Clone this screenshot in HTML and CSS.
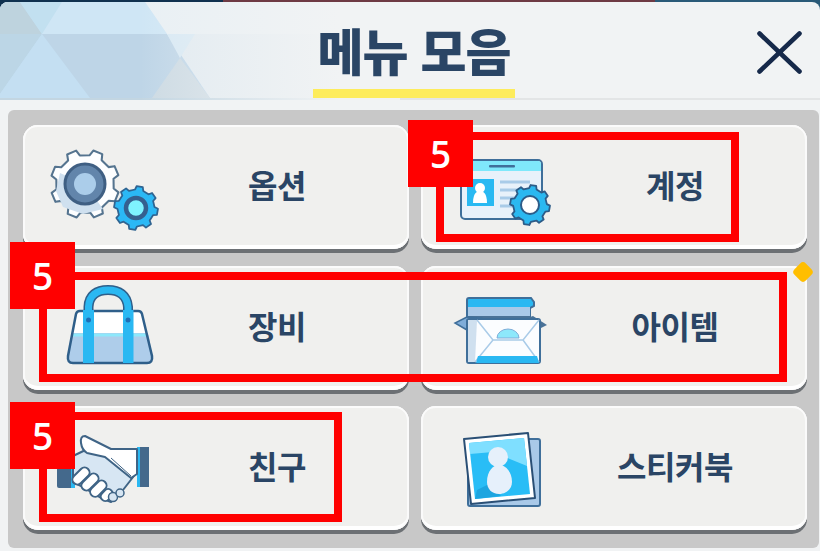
FILE: index.html
```html
<!DOCTYPE html>
<html lang="ko">
<head>
<meta charset="utf-8">
<title>메뉴 모음</title>
<link rel="stylesheet" href="styles.css">
</head>
<body>
<svg class="defs" width="0" height="0" aria-hidden="true">
  <defs>
    <polygon id="gear" points="82,-19 99,-14 99,14 82,19 71,45 80,60 60,80 45,71 19,82 14,99 -14,99 -19,82 -45,71 -60,80 -80,60 -71,45 -82,19 -99,14 -99,-14 -82,-19 -71,-45 -80,-60 -60,-80 -45,-71 -19,-82 -14,-99 14,-99 19,-82 45,-71 60,-80 80,-60 71,-45"/>
  </defs>
</svg>
<div class="screen">
  <header class="header">
    <svg class="header-art" viewBox="0 0 400 98" width="400" height="98" preserveAspectRatio="none" aria-hidden="true">
      <defs>
        <linearGradient id="fade" x1="0" x2="1" y1="0" y2="0">
          <stop offset="0.35" stop-color="#f1f3f4" stop-opacity="0"/>
          <stop offset="0.85" stop-color="#f1f3f4" stop-opacity="1"/>
        </linearGradient>
      </defs>
      <rect width="400" height="98" fill="#c4dff2"/>
      <polygon points="0,0 20,0 42,32 0,32" fill="#bed3de"/>
      <polygon points="20,0 62,0 42,32" fill="#c2e0f0"/>
      <polygon points="62,0 145,0 167,32 42,32" fill="#cfe6f5"/>
      <polygon points="145,0 400,0 400,32 167,32" fill="#e9f0f4"/>
      <polygon points="0,32 42,32 0,92" fill="#bcd6e6"/>
      <polygon points="42,32 90,96 0,96 0,92" fill="#c4dff2"/>
      <polygon points="42,32 167,32 210,96 90,96" fill="#bed5e7"/>
      <polygon points="167,32 400,32 400,96 210,96" fill="#e2ebf1"/>
      <polygon points="167,32 195,32 180,56" fill="#d8e9f4"/>
      <polygon points="180,56 152,96 210,96" fill="#ccdae3"/>
      <rect y="96" width="400" height="2" fill="#c3d6e2"/>
      <rect width="400" height="98" fill="url(#fade)"/>
    </svg>
    <h1 class="title">메뉴 모음</h1>
    <button class="close" type="button" aria-label="닫기">
      <svg width="45" height="43" viewBox="0 0 45 43" aria-hidden="true"><path d="M2.5 2.5 42.5 40.5M42.5 2.5 2.5 40.5" fill="none" stroke="#16294a" stroke-width="4.6" stroke-linecap="round"/></svg>
    </button>
  </header>

  <main class="panel">
    <a class="card">
      <svg class="icon" viewBox="0 0 124 124" aria-hidden="true">
        <use href="#gear" transform="translate(62 59) rotate(22) scale(.345)" fill="#fdfeff" stroke="#55748f" stroke-width="6" stroke-linejoin="round"/>
        <path d="M37 48 62 59 80 84 60 89 40 82 33 66Z" fill="#cfe0ef"/>
        <circle cx="62" cy="59" r="20" fill="#6285ab" stroke="#3f5f83" stroke-width="3"/>
        <circle cx="62" cy="59" r="11" fill="#abcdea"/>
        <use href="#gear" transform="translate(113 83) rotate(10) scale(.22)" fill="#2bb8f5" stroke="#2f6491" stroke-width="8" stroke-linejoin="round"/>
        <circle cx="113" cy="83" r="10" fill="#7ff2ff" stroke="#35608f" stroke-width="4.500"/>
      </svg>
      <span class="label">옵션</span>
    </a>
    <a class="card">
      <svg class="icon" viewBox="0 0 124 124" aria-hidden="true">
        <rect x="40" y="35" width="81" height="59" rx="4" fill="#e8f1fa" stroke="#3f6f9a" stroke-width="2"/>
        <path d="M41 46V39a3 3 0 0 1 3-3h73a3 3 0 0 1 3 3v7Z" fill="#7fe8fb"/>
        <rect x="68" y="40" width="26" height="2.500" rx="1" fill="#3f6f9a"/>
        <rect x="46" y="54" width="27" height="27" fill="#29b9f2"/>
        <circle cx="59" cy="63" r="5" fill="#fff"/>
        <path d="M52 78c0-10 4-12 7-12s7 2 7 12Z" fill="#fff"/>
        <path d="M79 57h30M79 65h30M79 73h22M79 81h18" stroke="#a9cbe8" stroke-width="3"/>
        <use href="#gear" transform="translate(109 80) rotate(10) scale(.2)" fill="#2bb8f0" stroke="#2d5c88" stroke-width="9" stroke-linejoin="round"/>
        <circle cx="109" cy="80" r="9" fill="#fff" stroke="#2d5c88" stroke-width="2"/>
      </svg>
      <span class="label">계정</span>
    </a>
    <a class="card">
      <svg class="icon" viewBox="0 0 124 124" aria-hidden="true">
        <path d="M53 48a4 4 0 0 1 4-3h58a4 4 0 0 1 4 3l10 42q1 7-5 7H50q-6 0-5-7Z" fill="#fff"/>
        <path d="M50 67h73q2 0 3 4l3 20q0 6-5 6H50q-6 0-5-6l3-20q0-4 2-4Z" fill="#aecdea"/>
        <path d="M49 69h75" stroke="#8de8fb" stroke-width="3"/>
        <path d="M53 48a4 4 0 0 1 4-3h58a4 4 0 0 1 4 3l10 42q1 7-5 7H50q-6 0-5-7Z" fill="none" stroke="#2f5f8a" stroke-width="2.500"/>
        <path d="M65.500 48V41C66 29 74 24 85 24S104 29 105 41V48" fill="none" stroke="#2f5f8a" stroke-width="10"/>
        <path d="M65.500 48V41C66 29 74 24 85 24S104 29 105 41V48" fill="none" stroke="#2ab8f2" stroke-width="7"/>
        <path d="M60 44h11v53H60ZM100 44h10.500v53H100Z" fill="#2ab8f2"/>
        <circle cx="65.500" cy="54" r="2.500" fill="#1f6eb5"/>
        <circle cx="105" cy="54" r="2.500" fill="#1f6eb5"/>
      </svg>
      <span class="label">장비</span>
    </a>
    <a class="card">
      <svg class="icon" viewBox="0 0 124 124" aria-hidden="true">
        <path d="M46 53V34a2 2 0 0 1 2-2h62l3 4v4l-4 2v11Z" fill="#2ab8f2" stroke="#3f6f9a" stroke-width="2"/>
        <rect x="47" y="41" width="62" height="13" fill="#a9c9e8"/>
        <path d="M47 50h62v4H47Z" fill="#4a7297"/>
        <path d="M46 51 34 57 46 64 60 52Z" fill="#7fadd9" stroke="#3f6f9a" stroke-width="1.500"/>
        <path d="M112 50 126 59 118 63 106 52Z" fill="#4a7297"/>
        <rect x="46" y="53" width="73" height="44" rx="2" fill="#fbfdff" stroke="#3f6f9a" stroke-width="2"/>
        <path d="M47 54h9l-2 42h-7Z" fill="#cfe0ef"/>
        <path d="M56 54 72 74 54 96M118 54 102 74 118 96M72 74H102" fill="none" stroke="#a9cbe8" stroke-width="1.500"/>
        <path d="M55 97 57 90H116L118 97Z" fill="#2ab8f2"/>
        <path d="M76 72a11 9 0 0 1 22 0Z" fill="#8de8fb" stroke="#7fadd9"/>
      </svg>
      <span class="label">아이템</span>
      <i class="dot"></i>
    </a>
    <a class="card">
      <svg class="icon" viewBox="0 0 124 124" aria-hidden="true">
        <rect x="34" y="55" width="18" height="27" rx="2" fill="#44698c"/>
        <rect x="48" y="55" width="4" height="27" fill="#2ab8f2"/>
        <rect x="114" y="41" width="12" height="40" fill="#44698c"/>
        <rect x="114" y="41" width="3" height="40" fill="#2ab8f2"/>
        <path d="M50 50 75 38 114 66 100 84 88 96 78 92 58 80 50 76Z" fill="#d7e6f3" stroke="#3f6486" stroke-width="2" stroke-linejoin="round"/>
        <path d="M58 37Q57 30 62 30L88 43H114V68L108 72 82 51 64 47Q59 44 58 37Z" fill="#fff" stroke="#3f6486" stroke-width="2" stroke-linejoin="round"/>
        <path d="M108 70 88 52" stroke="#3f6486" stroke-width="1"/>
        <g fill="#fff" stroke="#3f6486" stroke-width="2">
          <rect x="48" y="65" width="20" height="10" rx="5" transform="rotate(-45 58 70)"/>
          <rect x="57" y="71" width="20" height="10" rx="5" transform="rotate(-45 67 76)"/>
          <rect x="66" y="78" width="19" height="10" rx="5" transform="rotate(-45 75 83)"/>
          <rect x="77" y="85" width="13" height="9" rx="4.500" transform="rotate(-45 83 89)"/>
        </g>
        <g fill="#d7e6f3" stroke="#3f6486" stroke-width="1.500">
          <circle cx="90" cy="91" r="4.500"/>
          <circle cx="97" cy="87" r="4"/>
        </g>
      </svg>
      <span class="label">친구</span>
    </a>
    <a class="card">
      <svg class="icon" viewBox="0 0 124 124" aria-hidden="true">
        <rect x="47" y="33" width="72" height="67" rx="2" fill="#a9c9e8" stroke="#3f6f9a" stroke-width="2"/>
        <polygon points="43,33 107,27 114,92 50,98" fill="#fff" stroke="#2a4f75" stroke-width="2" stroke-linejoin="round"/>
        <polygon points="48,37 103,32 109,88 54,93" fill="#29bdf6"/>
        <polygon points="48,37 103,32 106,60 72,46 49,48" fill="#7fdfff"/>
        <polygon points="54,93 56,84 68,78 80,90" fill="#1da5e0"/>
        <circle cx="77" cy="51" r="10" fill="#e6f0fb"/>
        <path d="M66 76c0-11 6-17 12-17s13 6 13 17c0 7-6 12-13 12s-12-5-12-12Z" fill="#e6f0fb"/>
      </svg>
      <span class="label">스티커북</span>
    </a>
  </main>

  <div class="mark mark-a"></div>
  <div class="mark mark-b"></div>
  <div class="mark mark-c"></div>
  <div class="tag tag-a">5</div>
  <div class="tag tag-b">5</div>
  <div class="tag tag-c">5</div>
</div>
</body>
</html>
```

FILE: styles.css
```css
* { box-sizing: border-box; }
html, body { margin: 0; padding: 0; }
body {
  width: 820px;
  height: 551px;
  overflow: hidden;
  background: linear-gradient(90deg, #10314f 0 223px, #6e3a44 223px 655px, #2a5a78 655px 100%);
  font-family: "Noto Sans CJK KR", "Noto Sans", sans-serif;
}
.defs { position: absolute; }
.screen {
  position: relative;
  width: 820px;
  height: 549px;
  margin-top: 2px;
  display: flex;
  flex-direction: column;
  background: #f1f3f4;
  border-radius: 8px 8px 0 0;
  overflow: hidden;
}
.header {
  position: relative;
  flex: none;
  height: 98px;
  display: flex;
  align-items: flex-start;
  justify-content: center;
  border-bottom: 2px solid #e3e5e6;
}
.header-art { position: absolute; left: 0; top: 0; }
.title {
  position: relative;
  margin: 0 0 0 8px;
  width: 202px;
  height: 96px;
  padding-top: 12px;
  font-size: 50px;
  line-height: 70px;
  font-weight: 900;
  letter-spacing: -1px;
  text-align: center;
  white-space: nowrap;
  color: #2a4565;
  border-bottom: 9px solid #fdec5c;
}
.close {
  position: absolute;
  right: 18px;
  top: 29px;
  padding: 0;
  width: 45px;
  height: 43px;
  border: 0;
  background: none;
  line-height: 0;
}
.panel {
  flex: none;
  margin: 10px 1px 0 8px;
  padding: 15px 12px 0 15px;
  height: 438px;
  display: grid;
  grid-template-columns: 386px 386px;
  grid-template-rows: 124px 124px 124px;
  column-gap: 12px;
  row-gap: 16.5px;
  background: #c8c8c8;
  border-radius: 6px;
}
.card {
  position: relative;
  display: flex;
  align-items: center;
  background: #f0f0ee;
  border-radius: 15px;
  box-shadow: inset 0 2px 0 #fbfbfb, inset 2px 0 0 #fafafa, inset -2px 0 0 #fafafa, inset 0 -4px 0 #fff, 0 4px 0 #6c7074;
}
.icon { flex: none; width: 124px; height: 124px; overflow: visible; }
.label {
  flex: 1;
  padding-bottom: 6px;
  padding-right: 2px;
  text-align: center;
  font-size: 32px;
  font-weight: 700;
  letter-spacing: -0.5px;
  color: #2a4565;
  white-space: nowrap;
}
.dot {
  position: absolute;
  right: -4px;
  top: -2px;
  width: 16px;
  height: 16px;
  background: #ffbe00;
  border-radius: 4px;
  transform: rotate(45deg);
}
.mark { position: absolute; border: 8px solid #f00; }
.mark-a { left: 436px; top: 130px; width: 303px; height: 110px; }
.mark-b { left: 39px; top: 270px; width: 748px; height: 110px; }
.mark-c { left: 39px; top: 410px; width: 303px; height: 110px; }
.tag {
  position: absolute;
  width: 65px;
  height: 67px;
  background: #f00;
  color: #fff;
  font-family: "Open Sans", sans-serif;
  font-size: 37px;
  font-weight: 600;
  line-height: 67px;
  text-align: center;
}
.tag-a { left: 408px; top: 118px; }
.tag-b { left: 10px; top: 240px; }
.tag-c { left: 10px; top: 400px; }
```
